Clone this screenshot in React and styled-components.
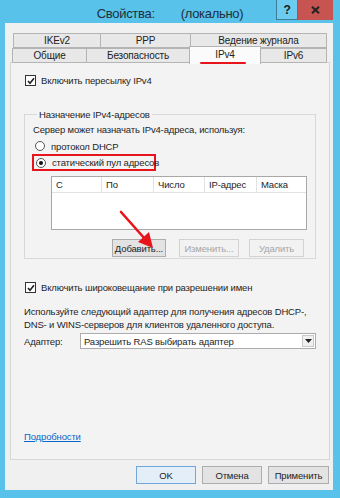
import React from "react";
import styled, { createGlobalStyle } from "styled-components";

const GlobalStyle = createGlobalStyle`
  html, body {
    margin: 0;
    padding: 0;
    background: #58c2ea;
  }
  body {
    font-family: "Liberation Sans", Arial, sans-serif;
    font-size: 9.5px;
    letter-spacing: -0.15px;
    color: #1e1e1e;
  }
`;

const topTabs = [
  { label: "IKEv2", w: 88 },
  { label: "PPP", w: 91 },
  { label: "Ведение журнала", w: 137 },
];

const bottomTabs = [
  { label: "Общие", w: 75 },
  { label: "Безопасность", w: 104 },
  { label: "IPv4", w: 72, active: true },
  { label: "IPv6", w: 67 },
];

const columns = [
  { label: "С", w: 50 },
  { label: "По", w: 52 },
  { label: "Число", w: 51 },
  { label: "IP-адрес", w: 52 },
  { label: "Маска", w: 49 },
];

const Check = ({ children }) => (
  <CheckRow>
    <CheckBox>
      <svg width="8" height="8" viewBox="0 0 8 8">
        <path d="M1 4 L3 6.3 L7 1.2" fill="none" stroke="#222" strokeWidth="1.6" />
      </svg>
    </CheckBox>
    <span>{children}</span>
  </CheckRow>
);

const App = () => {
  return (
    <>
      <GlobalStyle />
      <Frame>
        <TitleBar>
          <Title>
            <span>Свойства:</span>
            <span>(локально)</span>
          </Title>
          <Controls>
            <HelpButton>?</HelpButton>
            <CloseButton>
              <svg width="9" height="8" viewBox="0 0 9 8">
                <path d="M1 0.8 L8 7.2 M8 0.8 L1 7.2" stroke="#222" strokeWidth="2" />
              </svg>
            </CloseButton>
          </Controls>
        </TitleBar>

        <Body>
          <TabRow $ml={3}>
            {topTabs.map((t) => (
              <Tab key={t.label} $w={t.w}>
                {t.label}
              </Tab>
            ))}
          </TabRow>
          <TabRow $ml={2} $front>
            {bottomTabs.map((t) => (
              <Tab key={t.label} $w={t.w} $active={t.active}>
                {t.label}
                {t.active && <Underline />}
              </Tab>
            ))}
          </TabRow>

          <Panel>
            <Check>Включить пересылку IPv4</Check>

            <Group>
              <Legend>Назначение IPv4-адресов</Legend>
              <GroupText>Сервер может назначать IPv4-адреса, используя:</GroupText>
              <RadioRow>
                <Radio />
                <span>протокол DHCP</span>
              </RadioRow>
              <Highlight>
                <RadioRow>
                  <Radio $on />
                  <span>статический пул адресов</span>
                </RadioRow>
              </Highlight>

              <List>
                <ListHead>
                  {columns.map((c) => (
                    <HeadCell key={c.label} $w={c.w}>
                      {c.label}
                    </HeadCell>
                  ))}
                </ListHead>
              </List>

              <GroupButtons>
                <Button $w={54}>Добавить...</Button>
                <Button $w={60} $disabled $ml={13}>
                  Изменить...
                </Button>
                <Button $w={55} $disabled $ml={10}>
                  Удалить
                </Button>
              </GroupButtons>

              <Arrow width="44" height="44" viewBox="0 0 44 44">
                <path d="M3 3 L27 30" stroke="#e8141c" strokeWidth="2.6" strokeLinecap="round" />
                <polygon points="35,39 20,33 31,23" fill="#e8141c" />
              </Arrow>
            </Group>

            <Spaced $mt={22}>
              <Check>Включить широковещание при разрешении имен</Check>
            </Spaced>

            <Para>
              <div>Используйте следующий адаптер для получения адресов DHCP-,</div>
              <div>DNS- и WINS-серверов для клиентов удаленного доступа.</div>
            </Para>

            <AdapterRow>
              <AdapterLabel>Адаптер:</AdapterLabel>
              <Select>
                <span>Разрешить RAS выбирать адаптер</span>
                <SelectArrow>
                  <svg width="7" height="4" viewBox="0 0 7 4">
                    <polygon points="0,0 7,0 3.5,4" fill="#222" />
                  </svg>
                </SelectArrow>
              </Select>
            </AdapterRow>

            <Link>Подробности</Link>
          </Panel>

          <Footer>
            <Button $w={60} $h={18} $default>
              OK
            </Button>
            <Button $w={60} $h={18}>
              Отмена
            </Button>
            <Button $w={61} $h={18}>
              Применить
            </Button>
          </Footer>
        </Body>
      </Frame>
    </>
  );
};

const Frame = styled.div`
  width: 340px;
  height: 498px;
  background: #58c2ea;
  display: flex;
  flex-direction: column;
  overflow: hidden;
`;

const TitleBar = styled.div`
  height: 23px;
  display: flex;
  align-items: flex-start;
  flex-shrink: 0;
`;

const Title = styled.div`
  flex: 1;
  padding-left: 64px;
  height: 23px;
  display: flex;
  justify-content: center;
  align-items: center;
  gap: 26px;
  font-size: 13px;
  letter-spacing: -0.3px;
  color: #1d2f3a;
  padding-top: 4px;
  box-sizing: border-box;
`;

const Controls = styled.div`
  display: flex;
  margin-right: 7px;
`;

const HelpButton = styled.div`
  width: 20px;
  height: 19px;
  border: 1px solid #3a7d98;
  border-top: none;
  background: #6ccbee;
  display: flex;
  align-items: center;
  justify-content: center;
  font-weight: bold;
  font-size: 12px;
  color: #1a1a1a;
`;

const CloseButton = styled.div`
  width: 35px;
  height: 20px;
  background: #c75450;
  display: flex;
  align-items: center;
  justify-content: center;
`;

const Body = styled.div`
  flex: 1;
  margin: 0 7px 8px 5px;
  background: #f0f0f0;
  padding: 10px 3px 5px 5px;
  display: flex;
  flex-direction: column;
  box-sizing: border-box;
`;

const TabRow = styled.div`
  display: flex;
  margin-left: ${(p) => p.$ml}px;
  height: 15px;
  position: relative;
  z-index: ${(p) => (p.$front ? 2 : 1)};
  margin-bottom: ${(p) => (p.$front ? "-1px" : "0")};
`;

const Tab = styled.div`
  position: relative;
  width: ${(p) => p.$w}px;
  height: ${(p) => (p.$active ? 18 : 15)}px;
  margin-top: ${(p) => (p.$active ? -2 : 0)}px;
  margin-right: -1px;
  box-sizing: border-box;
  border: 1px solid #b4b4b4;
  border-bottom: ${(p) => (p.$active ? "none" : "1px solid #b4b4b4")};
  background: ${(p) => (p.$active ? "#fbfbfb" : "#e8e8e8")};
  display: flex;
  align-items: ${(p) => (p.$active ? "flex-start" : "center")};
  padding-top: ${(p) => (p.$active ? "2px" : "0")};
  justify-content: center;
  font-size: 10px;
  color: #222;
`;

const Underline = styled.div`
  position: absolute;
  left: 10px;
  bottom: 0;
  width: 46px;
  height: 2px;
  background: #e8141c;
  border-radius: 1px;
`;

const Panel = styled.div`
  height: 398px;
  box-sizing: border-box;
  border: 1px solid #d6d6d6;
  background: #f3f3f3;
  padding: 11px 13px 16px 13px;
  display: flex;
  flex-direction: column;
`;

const CheckRow = styled.div`
  display: flex;
  align-items: center;
  height: 13px;
  gap: 5px;
  padding-left: 1px;
  white-space: nowrap;
`;

const CheckBox = styled.div`
  width: 9px;
  height: 9px;
  border: 1px solid #333;
  background: #fff;
  display: flex;
  align-items: center;
  justify-content: center;
`;

const Group = styled.fieldset`
  position: relative;
  margin: 21px 0 0 0;
  padding: 2px 10px 1px 8px;
  border: 1px solid #d8d8d8;
  min-width: 0;
`;

const Legend = styled.legend`
  padding: 0 2px;
  margin-left: 4px;
  line-height: 13px;
`;

const GroupText = styled.div`
  line-height: 14px;
  margin-bottom: 2px;
`;

const RadioRow = styled.div`
  display: flex;
  align-items: center;
  height: 14px;
  gap: 6px;
  padding-left: 2px;
  white-space: nowrap;
`;

const Radio = styled.div`
  width: 8px;
  height: 8px;
  border-radius: 50%;
  border: 1px solid #555;
  background: #fff;
  display: flex;
  align-items: center;
  justify-content: center;
  &::after {
    content: "";
    width: 4px;
    height: 4px;
    border-radius: 50%;
    background: ${(p) => (p.$on ? "#111" : "transparent")};
  }
`;

const Highlight = styled.div`
  margin: 1px 0 0 -1px;
  width: 120px;
  border: 2px solid #e8141c;
  height: 13px;
  display: flex;
  align-items: center;
`;

const List = styled.div`
  margin: 5px 0 0 18px;
  width: 256px;
  height: 54px;
  box-sizing: border-box;
  border: 1px solid #a8a8a8;
  background: #fff;
`;

const ListHead = styled.div`
  display: flex;
  height: 15px;
  border-bottom: 1px solid #e2e2e2;
`;

const HeadCell = styled.div`
  width: ${(p) => p.$w}px;
  box-sizing: border-box;
  padding-left: 4px;
  border-right: 1px solid #e2e2e2;
  line-height: 15px;
  &:last-child {
    border-right: none;
  }
`;

const GroupButtons = styled.div`
  display: flex;
  justify-content: flex-end;
  margin: 9px 1px 0 0;
`;

const Button = styled.div`
  width: ${(p) => p.$w}px;
  height: ${(p) => p.$h || 18}px;
  margin-left: ${(p) => p.$ml || 0}px;
  box-sizing: border-box;
  border: 1px solid
    ${(p) => (p.$default ? "#6fa6dc" : p.$disabled ? "#d2d2d2" : "#adadad")};
  background: ${(p) => (p.$default ? "#e4eef8" : p.$disabled ? "#f2f2f2" : "#e3e3e3")};
  color: ${(p) => (p.$disabled ? "#a6a6a6" : "#1e1e1e")};
  display: flex;
  align-items: center;
  justify-content: center;
`;

const Arrow = styled.svg`
  position: absolute;
  left: 93px;
  top: 88px;
`;

const Spaced = styled.div`
  margin-top: ${(p) => p.$mt}px;
`;

const Para = styled.div`
  margin-top: 11px;
  line-height: 13px;
  white-space: nowrap;
`;

const AdapterRow = styled.div`
  display: flex;
  align-items: center;
  margin-top: 2px;
`;

const AdapterLabel = styled.div`
  width: 56px;
`;

const Select = styled.div`
  width: 236px;
  height: 16px;
  box-sizing: border-box;
  border: 1px solid #acacac;
  background: #fff;
  display: flex;
  align-items: center;
  justify-content: space-between;
  padding-left: 3px;
`;

const SelectArrow = styled.div`
  width: 12px;
  height: 12px;
  margin-right: 1px;
  box-sizing: border-box;
  border: 1px solid #c9c9c9;
  background: #f0f0f0;
  display: flex;
  align-items: center;
  justify-content: center;
`;

const Link = styled.div`
  margin-top: auto;
  color: #0a66c8;
  text-decoration: underline;
  line-height: 13px;
  width: max-content;
`;

const Footer = styled.div`
  display: flex;
  justify-content: flex-end;
  gap: 6px;
  margin: 6px 1px 0 0;
`;

export default App;
